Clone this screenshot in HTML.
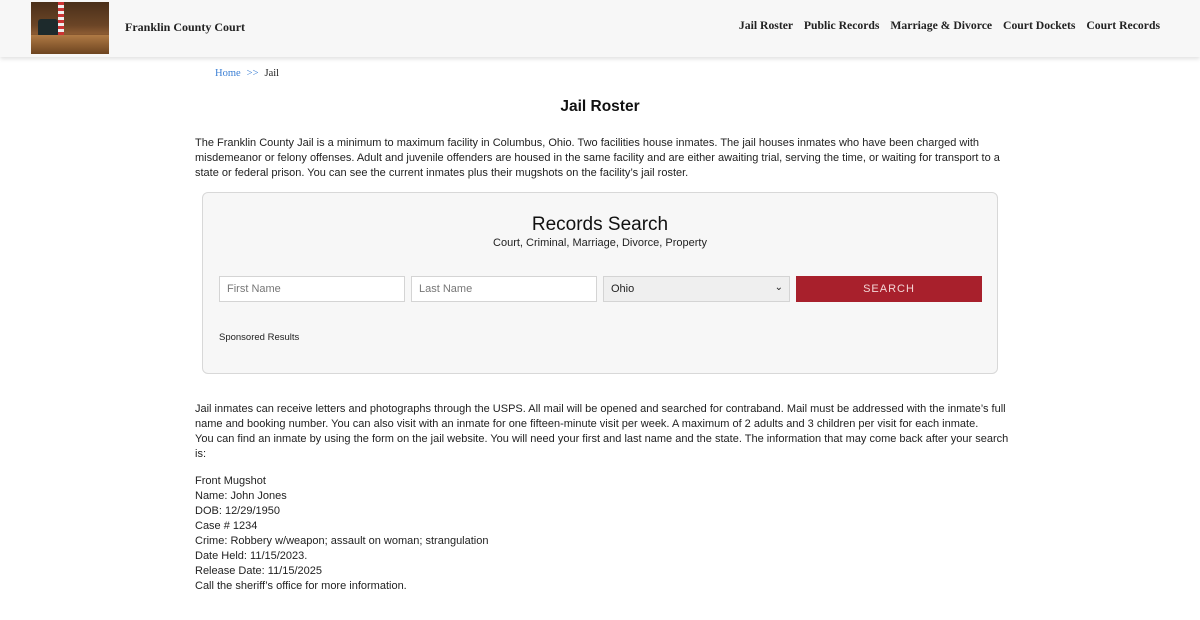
<!DOCTYPE html>
<html><head><meta charset="utf-8"><style>
*{box-sizing:border-box;margin:0;padding:0}
body{width:1200px;height:620px;overflow:hidden;background:#fff;font-family:"Liberation Sans",sans-serif;color:#222}
.hdr{height:57px;background:#f7f7f7;box-shadow:0 2px 4px rgba(0,0,0,.12);position:relative}
.logo{position:absolute;left:31px;top:2px;width:78px;height:52px;background:linear-gradient(180deg,#4a2f1a 0%,#6b4526 45%,#8a5a32 60%,#4a2a12 100%);overflow:hidden}
.logo .chair{position:absolute;left:7px;top:17px;width:20px;height:18px;background:#1d2a2c;border-radius:3px}
.logo .flag{position:absolute;left:27px;top:0;width:6px;height:34px;background:repeating-linear-gradient(180deg,#c33 0 3px,#eee 3px 6px)}
.logo .desk{position:absolute;left:0;top:33px;width:78px;height:19px;background:linear-gradient(#b07a45,#6d4420)}
.brand{position:absolute;left:125px;top:20px;font-family:"Liberation Serif",serif;font-weight:bold;font-size:12px;color:#222}
.nav{position:absolute;right:40px;top:19px;font-family:"Liberation Serif",serif;font-weight:bold;font-size:11.7px;color:#222}
.nav span{margin-left:8px}
.bc{position:absolute;left:215px;top:68px;font-family:"Liberation Serif",serif;font-size:10.5px}
.bc a{color:#3b7fd4;text-decoration:none}
.bc .g{color:#3b7fd4;margin:0 6px}
h1{position:absolute;left:0;width:1200px;top:98px;text-align:center;font-size:15.5px;font-weight:bold;color:#111}
.p{position:absolute;left:195px;width:900px;white-space:nowrap;font-size:11px;line-height:15px;color:#222}
.box{position:absolute;left:202px;top:192px;width:796px;height:182px;background:#f7f7f7;border:1px solid #d8d8d8;border-radius:6px}
.box .t{position:absolute;top:21px;width:100%;text-align:center;font-size:19px;color:#111}
.box .s{position:absolute;top:44px;width:100%;text-align:center;font-size:11px;color:#222}
.in{position:absolute;top:83px;height:26px;border:1px solid #d4d4d4;background:#fff;font-size:11px;color:#777;padding:6px 7px}
.sel{background:#efefef;color:#222}
.btn{position:absolute;top:83px;left:593px;width:186px;height:26px;background:#a8202c;color:#f3d6d6;font-size:11px;letter-spacing:1px;text-align:center;line-height:26px}
.sp{position:absolute;left:16px;top:139px;font-size:9.5px;color:#222}
</style></head><body>
<div class="hdr">
<div class="logo"><div class="flag"></div><div class="chair"></div><div class="desk"></div></div>
<div class="brand">Franklin County Court</div>
<div class="nav"><span>Jail Roster</span> <span>Public Records</span> <span>Marriage &amp; Divorce</span> <span>Court Dockets</span> <span>Court Records</span></div>
</div>
<div class="bc"><a>Home</a><span class="g">&gt;&gt;</span>Jail</div>
<h1>Jail Roster</h1>
<div class="p" style="top:136px">The Franklin County Jail is a minimum to maximum facility in Columbus, Ohio. Two facilities house inmates. The jail houses inmates who have been charged with<br>misdemeanor or felony offenses. Adult and juvenile offenders are housed in the same facility and are either awaiting trial, serving the time, or waiting for transport to a<br>state or federal prison. You can see the current inmates plus their mugshots on the facility’s jail roster.</div>
<div class="box">
<div class="t">Records Search</div>
<div class="s">Court, Criminal, Marriage, Divorce, Property</div>
<div class="in" style="left:16px;width:186px">First Name</div>
<div class="in" style="left:208px;width:186px">Last Name</div>
<div class="in sel" style="left:400px;width:187px">Ohio<span style="position:absolute;right:6px;top:5px;font-size:10px">&#8964;</span></div>
<div class="btn">SEARCH</div>
<div class="sp">Sponsored Results</div>
</div>
<div class="p" style="top:402px">Jail inmates can receive letters and photographs through the USPS. All mail will be opened and searched for contraband. Mail must be addressed with the inmate’s full<br>name and booking number. You can also visit with an inmate for one fifteen-minute visit per week. A maximum of 2 adults and 3 children per visit for each inmate.<br>You can find an inmate by using the form on the jail website. You will need your first and last name and the state. The information that may come back after your search<br>is:</div>
<div class="p" style="top:474px">Front Mugshot<br>Name: John Jones<br>DOB: 12/29/1950<br>Case # 1234<br>Crime: Robbery w/weapon; assault on woman; strangulation<br>Date Held: 11/15/2023.<br>Release Date: 11/15/2025<br>Call the sheriff’s office for more information.</div>
</body></html>
